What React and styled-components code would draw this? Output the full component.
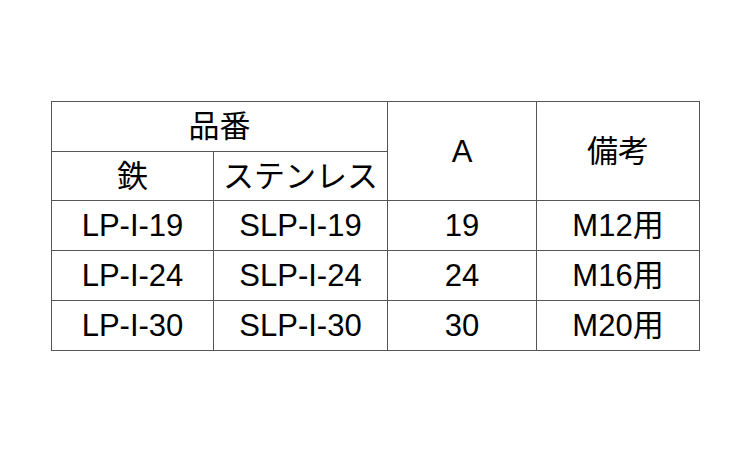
import React from 'react';
import styled, { createGlobalStyle } from 'styled-components';

const GlobalStyle = createGlobalStyle`
  html, body { margin: 0; padding: 0; background: #fff; }
  body { font-family: "Liberation Sans", Arial, "Noto Sans CJK JP", sans-serif; }
`;

const Page = styled.div`
  width: 750px;
  height: 450px;
  padding: 101px 0 0 51px;
  box-sizing: border-box;
`;

const Table = styled.table`
  border-collapse: collapse;
  table-layout: fixed;
  width: 649px;
  color: #000;
`;

const Cell = styled.td`
  border: 1px solid #555;
  height: ${({ $h }) => $h || 49}px;
  padding: 0;
  text-align: center;
  vertical-align: middle;
  font-size: 31px;
  line-height: 1;
  font-family: "Liberation Sans", Arial, "Noto Sans CJK JP", sans-serif;
`;

const rows = [
  ['LP-I-19', 'SLP-I-19', '19', 'M12用'],
  ['LP-I-24', 'SLP-I-24', '24', 'M16用'],
  ['LP-I-30', 'SLP-I-30', '30', 'M20用'],
];

export default function App() {
  return (
    <Page>
      <GlobalStyle />
      <Table>
        <colgroup>
          <col style={{ width: 162 }} />
          <col style={{ width: 174 }} />
          <col style={{ width: 149 }} />
          <col style={{ width: 163 }} />
        </colgroup>
        <tbody>
          <tr>
            <Cell colSpan={2} $h={49}>品番</Cell>
            <Cell rowSpan={2}>A</Cell>
            <Cell rowSpan={2}>備考</Cell>
          </tr>
          <tr>
            <Cell $h={48}>鉄</Cell>
            <Cell $h={48}>ステンレス</Cell>
          </tr>
          {rows.map((r) => (
            <tr key={r[0]}>
              {r.map((v) => (
                <Cell key={v} $h={49}>{v}</Cell>
              ))}
            </tr>
          ))}
        </tbody>
      </Table>
    </Page>
  );
}
